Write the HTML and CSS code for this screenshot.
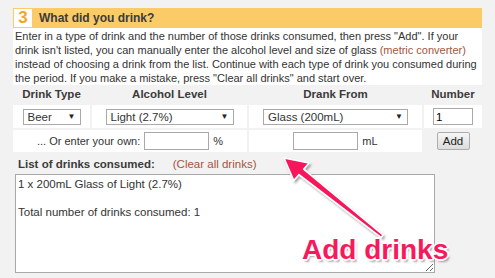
FILE: index.html
```html
<!DOCTYPE html>
<html lang="en">
<head>
  <meta charset="UTF-8">
  <title>What did you drink?</title>
  <link rel="stylesheet" href="styles.css">
</head>
<body>
  <div class="step">
    <div class="step-head">
      <span class="step-num">3</span>
      <span class="step-title">What did you drink?</span>
    </div>

    <div class="step-intro">
      Enter in a type of drink and the number of those drinks consumed, then press "Add". If your
      drink isn't listed, you can manually enter the alcohol level and size of glass
      <a href="#" class="link">(metric converter)</a>
      instead of choosing a drink from the list. Continue with each type of drink you consumed during
      the period. If you make a mistake, press "Clear all drinks" and start over.
    </div>

    <div class="drinks">
      <div class="col-head">Drink Type</div>
      <div class="col-head">Alcohol Level</div>
      <div class="col-head">Drank From</div>
      <div class="col-head">Number</div>

      <div class="cell"><span class="pick pick-type">Beer</span></div>
      <div class="cell"><span class="pick pick-level">Light (2.7%)</span></div>
      <div class="cell"><span class="pick pick-glass">Glass (200mL)</span></div>
      <div class="cell"><input type="text" class="field field-num" value="1"></div>

      <div class="cell cell-wide">
        <span>... Or enter your own:</span>
        <input type="text" class="field field-own">
        <span>%</span>
      </div>
      <div class="cell">
        <input type="text" class="field field-own">
        <span>mL</span>
      </div>
      <div class="cell cell-bare"><button class="btn">Add</button></div>
    </div>

    <div class="list-head">
      <strong>List of drinks consumed:</strong>
      <a href="#" class="link">(Clear all drinks)</a>
    </div>
    <textarea class="list-box">1 x 200mL Glass of Light (2.7%)

Total number of drinks consumed: 1</textarea>
  </div>

  <!-- annotation drawn on top of the screenshot -->
  <svg class="callout-arrow" width="495" height="278" viewBox="0 0 495 278">
    <defs>
      <filter id="soft" x="-20%" y="-20%" width="140%" height="140%">
        <feDropShadow dx="1.5" dy="2" stdDeviation="1.2" flood-color="#000" flood-opacity="0.35"/>
      </filter>
    </defs>
    <polygon filter="url(#soft)" fill="#f7195c" stroke="#fff" stroke-width="1.5" stroke-linejoin="round"
      points="284,158 309,163 303.6,169.2 383,235 381,237.4 299,174.6 293.8,180.6"/>
  </svg>
  <div class="callout-text">Add drinks</div>
</body>
</html>
```

FILE: styles.css
```css
body {
  margin: 0;
  background: #f2f2f2;
  font-family: "Liberation Sans", Arial, sans-serif;
  font-size: 11px;
  color: #333;
}
.step {
  width: 469px;
  margin: 8px 0 0 13px;
}
.step-head {
  display: flex;
  align-items: center;
  height: 20px;
  background: #fbcb68;
}
.step-num {
  width: 20px;
  height: 20px;
  box-sizing: border-box;
  border: 1px solid #fbcb68;
  background: #fff;
  color: #f6a623;
  font-weight: bold;
  font-size: 17px;
  display: flex;
  align-items: center;
  justify-content: center;
}
.step-title {
  margin-left: 6px;
  font-weight: bold;
  font-size: 12px;
  color: #3b3b3b;
}
.step-intro {
  background: #fff;
  padding: 1px 4px 0 2px;
  line-height: 14px;
}
.link {
  color: #a2553c;
  text-decoration: none;
}
.drinks {
  display: grid;
  grid-template-columns: 77px 155px 173px 58px;
  grid-template-rows: 18px 23px 22px;
  gap: 2px;
}
.col-head {
  display: flex;
  align-items: center;
  justify-content: center;
  font-weight: bold;
  font-size: 11.5px;
  color: #3b3b3b;
}
.cell {
  background: #fff;
  display: flex;
  align-items: center;
  justify-content: center;
  gap: 4px;
}
.cell-wide {
  grid-column: span 2;
}
.cell-bare {
  background: transparent;
}
.pick {
  position: relative;
  box-sizing: border-box;
  height: 16px;
  border: 1px solid #a9a9a9;
  background: #fff;
  padding: 0 0 0 4px;
  line-height: 14px;
  font-size: 11.5px;
}
.pick::after {
  content: "\25BC";
  position: absolute;
  right: 4px;
  top: 0;
  font-size: 8px;
  color: #222;
}
.pick-type { width: 58px; }
.pick-level { width: 128px; }
.pick-glass { width: 145px; }
.field {
  box-sizing: border-box;
  border: 1px solid #a9a9a9;
  background: #fff;
  font-family: inherit;
  font-size: 11.5px;
  padding: 0 2px;
  margin: 0;
}
.field-num {
  width: 40px;
  height: 17px;
}
.field-own {
  width: 65px;
  height: 18px;
}
.btn {
  width: 33px;
  height: 18px;
  padding: 0;
  font-family: inherit;
  font-size: 11.5px;
  color: #222;
  border: 1px solid #adadad;
  border-radius: 2px;
  background: linear-gradient(#f6f6f6, #dcdcdc);
}
.list-head {
  display: flex;
  gap: 18px;
  padding: 6px 0 0 5px;
  height: 22px;
  box-sizing: border-box;
  font-size: 11.5px;
}
.list-head strong {
  color: #3b3b3b;
}
.list-box {
  display: block;
  box-sizing: border-box;
  width: 420px;
  height: 99px;
  margin: 0 0 0 2px;
  padding: 2px 2px;
  border: 1px solid #a9a9a9;
  font-family: inherit;
  font-size: 11.5px;
  line-height: 14px;
  color: #333;
  resize: both;
}
.callout-arrow {
  position: absolute;
  left: 0;
  top: 0;
  pointer-events: none;
}
.callout-text {
  position: absolute;
  left: 302px;
  top: 234px;
  font-family: "Liberation Sans", Arial, sans-serif;
  font-weight: bold;
  font-size: 28px;
  line-height: 32px;
  color: #f7195c;
  text-shadow:
    -1px -1px 0 #fff, 1px -1px 0 #fff, -1px 1px 0 #fff, 1px 1px 0 #fff,
    0 -2px 0 #fff, 0 2px 0 #fff, -2px 0 0 #fff, 2px 0 0 #fff,
    2px 3px 2px rgba(0, 0, 0, 0.35);
}
```
